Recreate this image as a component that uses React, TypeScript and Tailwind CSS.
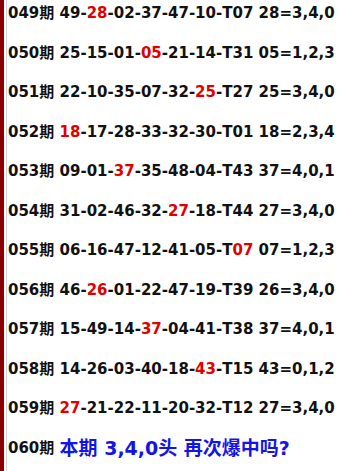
import React from "react";

type Row = {
  issue: string;
  nums: string[];
  t: string;
  result: string;
  hit: number; // index of red number, 6 means the T number
};

const rows: Row[] = [
  { issue: "049", nums: ["49", "28", "02", "37", "47", "10"], t: "07", result: "28=3,4,0", hit: 1 },
  { issue: "050", nums: ["25", "15", "01", "05", "21", "14"], t: "31", result: "05=1,2,3", hit: 3 },
  { issue: "051", nums: ["22", "10", "35", "07", "32", "25"], t: "27", result: "25=3,4,0", hit: 5 },
  { issue: "052", nums: ["18", "17", "28", "33", "32", "30"], t: "01", result: "18=2,3,4", hit: 0 },
  { issue: "053", nums: ["09", "01", "37", "35", "48", "04"], t: "43", result: "37=4,0,1", hit: 2 },
  { issue: "054", nums: ["31", "02", "46", "32", "27", "18"], t: "44", result: "27=3,4,0", hit: 4 },
  { issue: "055", nums: ["06", "16", "47", "12", "41", "05"], t: "07", result: "07=1,2,3", hit: 6 },
  { issue: "056", nums: ["46", "26", "01", "22", "47", "19"], t: "39", result: "26=3,4,0", hit: 1 },
  { issue: "057", nums: ["15", "49", "14", "37", "04", "41"], t: "38", result: "37=4,0,1", hit: 3 },
  { issue: "058", nums: ["14", "26", "03", "40", "18", "43"], t: "15", result: "43=0,1,2", hit: 5 },
  { issue: "059", nums: ["27", "21", "22", "11", "20", "32"], t: "12", result: "27=3,4,0", hit: 0 },
];

const font = { fontFamily: '"DejaVu Sans", "Noto Sans CJK SC", sans-serif' };

const App: React.FC = () => {
  return (
    <div className="flex w-[341px] h-[471px] overflow-hidden bg-white" style={font}>
      {/* left border */}
      <div className="w-[4px] bg-[#8b0000]" />
      <div className="w-[2px] bg-white" />
      <div className="w-px bg-[#d4d4d4]" />

      <div className="flex-1 flex flex-col gap-[19.5px] pt-[3px] pl-px text-[15px] font-bold leading-[20px] text-[#111] whitespace-nowrap">
        {rows.map((r) => (
          <div key={r.issue}>
            {r.issue}期{" "}
            {r.nums.map((n, i) => (
              <span key={i}>
                <span className={i === r.hit ? "text-[#e00000]" : ""}>{n}</span>-
              </span>
            ))}
            T<span className={r.hit === 6 ? "text-[#e00000]" : ""}>{r.t}</span> {r.result}
          </div>
        ))}
        <div className="flex items-center h-[20px]">
          <span>060期&nbsp;</span>
          <span className="text-[19px] text-[#1414e6]">本期 3,4,0头 再次爆中吗?</span>
        </div>
      </div>
    </div>
  );
};

export default App;
